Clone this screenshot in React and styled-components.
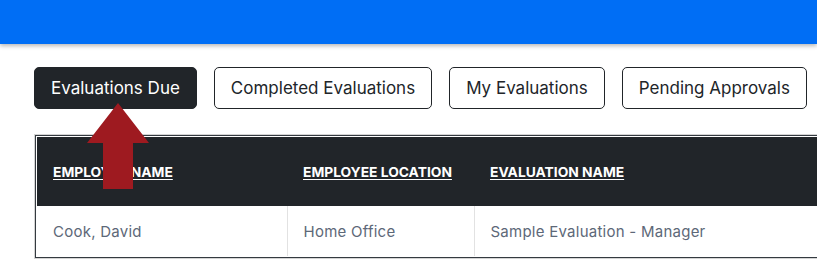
import React from "react";
import styled, { createGlobalStyle } from "styled-components";

const Global = createGlobalStyle`
  html, body { margin: 0; padding: 0; background: #fff; overflow: hidden; }
  body { font-family: Inter, "Noto Sans", "Liberation Sans", sans-serif; }
`;

const TopBar = styled.header`
  height: 44px;
  background: #006ef5;
  box-shadow: 0 2px 4px rgba(0, 0, 0, 0.28);
  position: relative;
  z-index: 1;
`;

const Content = styled.main`
  padding: 23px 0 0 34px;
`;

const TabRow = styled.nav`
  position: relative;
  display: flex;
  gap: 17px;
  margin-bottom: 25px;
`;

const TabButton = styled.button`
  box-sizing: border-box;
  height: 42px;
  padding: 0 16px;
  border: 1px solid #212529;
  border-radius: 5px;
  background: ${(p) => (p.$active ? "#212529" : "#fff")};
  color: ${(p) => (p.$active ? "#fff" : "#212529")};
  font-family: Inter, "Noto Sans", sans-serif;
  font-size: 17px;
  white-space: nowrap;
  cursor: pointer;
`;

const Arrow = styled.svg`
  position: absolute;
  left: 53px;
  top: 36px;
  z-index: 2;
`;

const TableFrame = styled.div`
  width: 1100px;
  border: 1px solid #d4d4d4;
`;

const TableInner = styled.div`
  border: 1px solid #343a40;
  padding: 1px;
  background: #fff;
`;

const Table = styled.table`
  width: 100%;
  border-collapse: collapse;
  table-layout: fixed;
`;

const HeadCell = styled.th`
  height: 69px;
  padding: 0 16px;
  background: #212529;
  text-align: left;
  vertical-align: middle;
  font-size: 13.8px;
  font-weight: 700;
  color: #fff;
  text-transform: uppercase;
  a {
    color: #fff;
    text-decoration: underline;
    text-underline-offset: 2px;
  }
`;

const Cell = styled.td`
  height: 49px;
  padding: 1px 16px 0;
  font-size: 15px;
  color: #5d6878;
  vertical-align: middle;
  border-left: ${(p) => (p.$first ? "none" : "1px solid #e2e2e2")};
  letter-spacing: 0.25px;
`;

const columns = [
  { label: "Employee Name", width: 250 },
  { label: "Employee Location", width: 187 },
  { label: "Evaluation Name", width: 660 },
];

const rows = [["Cook, David", "Home Office", "Sample Evaluation - Manager"]];

const tabs = [
  "Evaluations Due",
  "Completed Evaluations",
  "My Evaluations",
  "Pending Approvals",
];

export default function App() {
  return (
    <>
      <Global />
      <TopBar />
      <Content>
        <TabRow>
          {tabs.map((t, i) => (
            <TabButton key={t} $active={i === 0}>
              {t}
            </TabButton>
          ))}
          <Arrow width="62" height="86" viewBox="0 0 62 86">
            <polygon
              points="31,0 62,40 46,40 46,86 16,86 16,40 0,40"
              fill="#9e1a20"
            />
          </Arrow>
        </TabRow>
        <TableFrame>
          <TableInner>
            <Table>
              <colgroup>
                {columns.map((c) => (
                  <col key={c.label} style={{ width: c.width }} />
                ))}
              </colgroup>
              <thead>
                <tr>
                  {columns.map((c) => (
                    <HeadCell key={c.label}>
                      <a href="#">{c.label}</a>
                    </HeadCell>
                  ))}
                </tr>
              </thead>
              <tbody>
                {rows.map((r, ri) => (
                  <tr key={ri}>
                    {r.map((v, ci) => (
                      <Cell key={ci} $first={ci === 0}>
                        {v}
                      </Cell>
                    ))}
                  </tr>
                ))}
              </tbody>
            </Table>
          </TableInner>
        </TableFrame>
      </Content>
    </>
  );
}
